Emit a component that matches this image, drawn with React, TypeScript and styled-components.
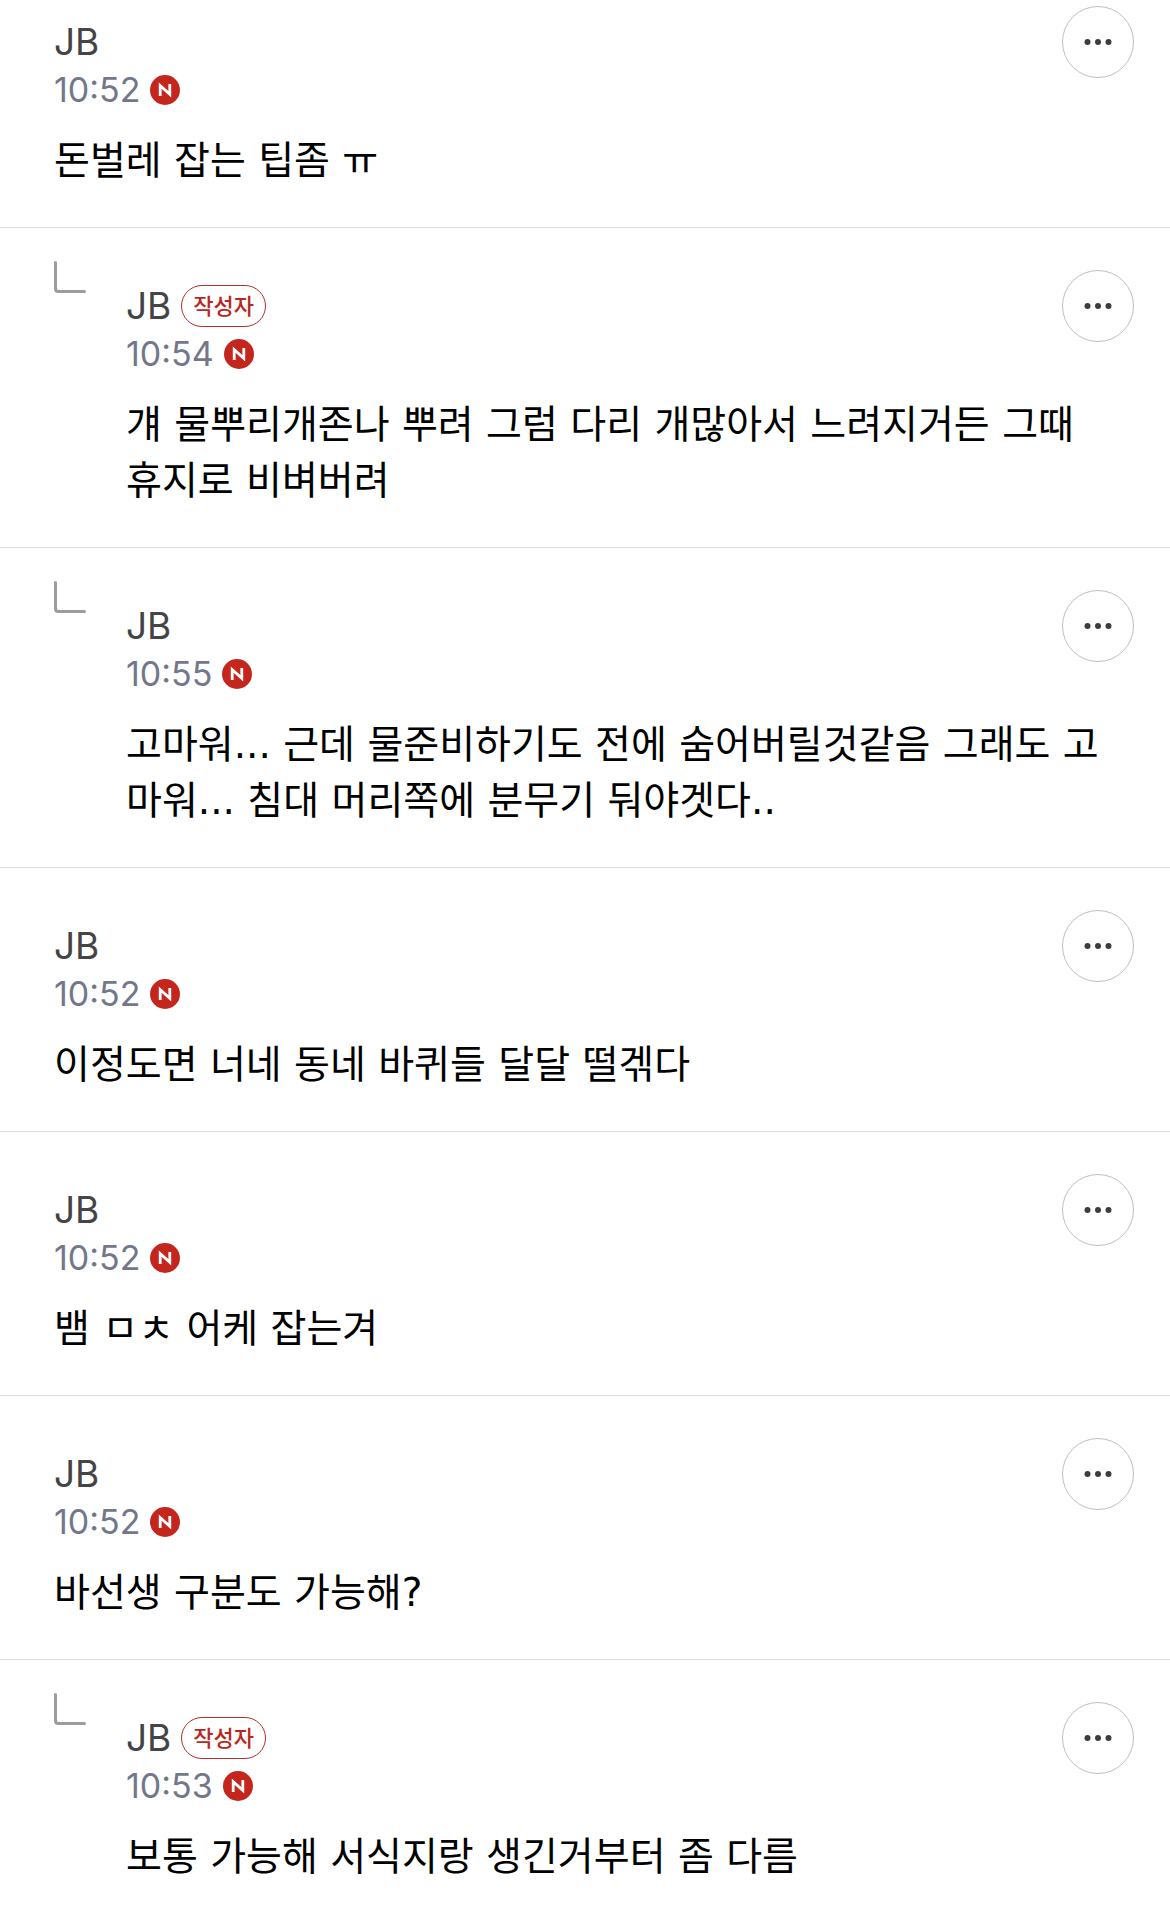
import React from 'react';
import styled, { createGlobalStyle } from 'styled-components';

const Global = createGlobalStyle`
  * { box-sizing: border-box; }
  body { margin: 0; background: #fff; font-family: Inter, "Noto Sans CJK KR", sans-serif; }
`;

const List = styled.ul`
  margin: 0;
  padding: 0;
  list-style: none;
  overflow: hidden;
`;

const Item = styled.li<{ $first: boolean; $reply: boolean }>`
  display: grid;
  grid-template-columns: ${p => (p.$reply ? '72px ' : '')}minmax(0, 1fr);
  padding: ${p => (p.$first ? 6 : 42)}px 36px 38px 54px;
  border-bottom: 1px solid #dcdcde;
`;

const Corner = styled.svg`
  width: 32px;
  height: 32px;
  margin-top: -9px;
`;

const Head = styled.header`
  display: flex;
  justify-content: space-between;
  align-items: flex-start;
  height: 104px;
`;

const NameRow = styled.div`
  display: flex;
  align-items: center;
  gap: 10px;
  height: 72px;
`;

const Name = styled.span`
  font-size: 37px;
  line-height: 48px;
  color: #444446;
`;

const Badge = styled.span`
  height: 42px;
  padding: 0 11px;
  border: 1px solid #b3302c;
  border-radius: 21px;
  font-size: 22px;
  font-weight: 500;
  line-height: 40px;
  color: #b8281f;
`;

const TimeRow = styled.div`
  display: flex;
  align-items: center;
  gap: 10px;
  height: 24px;
`;

const Time = styled.time`
  font-size: 34px;
  line-height: 40px;
  color: #72788a;
`;

const More = styled.button`
  display: grid;
  place-items: center;
  width: 72px;
  height: 72px;
  padding: 0;
  border: 1px solid #c0c0c2;
  border-radius: 50%;
  background: #fff;
`;

const Text = styled.p`
  margin: 23px 0 0;
  padding-right: 18px;
  font-family: "DejaVu Sans", "Noto Sans CJK KR", sans-serif;
  font-size: 39px;
  line-height: 56px;
  color: #000;
  word-break: break-all;
`;

const ReplyCorner = () => (
  <Corner viewBox="0 0 32 32" fill="none" stroke="#9c9c9e" strokeWidth="3" strokeLinecap="round" aria-hidden="true">
    <path d="M1.5 1.5V27.5Q1.5 30.5 4.5 30.5H30.5" />
  </Corner>
);

const NewMark = () => (
  <svg width="30" height="30" viewBox="0 0 30 30" role="img" aria-label="N">
    <circle cx="15" cy="15" r="15" fill="#c4261d" />
    <path d="M10.2 21V10.6L19.8 19.4V9" fill="none" stroke="#fff" strokeWidth="2.8" strokeLinejoin="miter" />
  </svg>
);

const Dots = () => (
  <svg width="28" height="8" viewBox="0 0 28 8" fill="#3c3c3e" aria-hidden="true">
    <circle cx="3.5" cy="4" r="3" />
    <circle cx="14" cy="4" r="3" />
    <circle cx="24.5" cy="4" r="3" />
  </svg>
);

type Comment = { time: string; text: string; reply?: boolean; author?: boolean };

const comments: Comment[] = [
  { time: '10:52', text: '돈벌레 잡는 팁좀 ㅠ' },
  { time: '10:54', text: '걔 물뿌리개존나 뿌려 그럼 다리 개많아서 느려지거든 그때 휴지로 비벼버려', reply: true, author: true },
  { time: '10:55', text: '고마워... 근데 물준비하기도 전에 숨어버릴것같음 그래도 고마워... 침대 머리쪽에 분무기 둬야겟다..', reply: true },
  { time: '10:52', text: '이정도면 너네 동네 바퀴들 달달 떨겎다' },
  { time: '10:52', text: '뱀 ㅁㅊ 어케 잡는겨' },
  { time: '10:52', text: '바선생 구분도 가능해?' },
  { time: '10:53', text: '보통 가능해 서식지랑 생긴거부터 좀 다름', reply: true, author: true },
];

export default function App() {
  return (
    <>
      <Global />
      <List>
        {comments.map((c, i) => (
          <Item key={i} $first={i === 0} $reply={!!c.reply}>
            {c.reply && <ReplyCorner />}
            <article>
              <Head>
                <div>
                  <NameRow>
                    <Name>JB</Name>
                    {c.author && <Badge>작성자</Badge>}
                  </NameRow>
                  <TimeRow>
                    <Time>{c.time}</Time>
                    <NewMark />
                  </TimeRow>
                </div>
                <More type="button" aria-label="더보기"><Dots /></More>
              </Head>
              <Text>{c.text}</Text>
            </article>
          </Item>
        ))}
      </List>
    </>
  );
}
